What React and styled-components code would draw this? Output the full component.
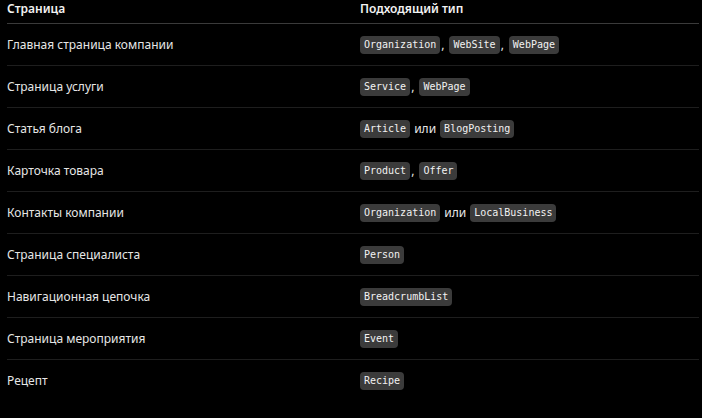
import React from 'react'
import styled, { createGlobalStyle } from 'styled-components'

const GlobalStyle = createGlobalStyle`
  html, body {
    margin: 0;
    padding: 0;
    background: #000;
  }
  body {
    font-family: "Segoe UI", "Noto Sans", sans-serif;
    color: #e8e8e8;
  }
`

const Wrapper = styled.div`
  width: 702px;
  height: 418px;
  overflow: hidden;
  background: #000;
  padding: 0 3px 0 7px;
  box-sizing: border-box;
`
const Table = styled.div`
  display: grid;
  grid-template-columns: 353px 1fr;
`
const HeadCell = styled.div`
  font-size: 12px;
  font-weight: 600;
  color: #f2f2f2;
  line-height: 17px;
  padding: 0 0 6px 0;
  border-bottom: 1px solid #3a3a3a;
`
const Cell = styled.div`
  display: flex;
  align-items: center;
  flex-wrap: wrap;
  height: 41px;
  font-size: 12px;
  color: #e6e6e6;
  border-bottom: 1px solid ${props => props.last ? 'transparent' : '#1e1e1e'};
`
const Code = styled.code`
  font-family: "DejaVu Sans Mono", "Liberation Mono", monospace;
  font-size: 10px;
  font-weight: 400;
  color: #f2f2f2;
  background: #3b3b3b;
  border-radius: 4px;
  padding: 2px 4px;
  line-height: 14px;
`
const Sep = styled.span`
  margin: 0 ${props => props.word ? '4px' : '5px'} 0 ${props => props.word ? '4px' : '1px'};
`

const rows = [
  { page: 'Главная страница компании', types: ['Organization', ',', 'WebSite', ',', 'WebPage'] },
  { page: 'Страница услуги', types: ['Service', ',', 'WebPage'] },
  { page: 'Статья блога', types: ['Article', 'или', 'BlogPosting'] },
  { page: 'Карточка товара', types: ['Product', ',', 'Offer'] },
  { page: 'Контакты компании', types: ['Organization', 'или', 'LocalBusiness'] },
  { page: 'Страница специалиста', types: ['Person'] },
  { page: 'Навигационная цепочка', types: ['BreadcrumbList'] },
  { page: 'Страница мероприятия', types: ['Event'] },
  { page: 'Рецепт', types: ['Recipe'] },
]

function TypeList({ types }) {
  return types.map((t, i) => {
    if (t === ',') return <Sep key={i}>,</Sep>
    if (t === 'или') return <Sep key={i} word>или</Sep>
    return <Code key={i}>{t}</Code>
  })
}

export default function App() {
  return (
    <Wrapper>
      <GlobalStyle />
      <Table>
        <HeadCell>Страница</HeadCell>
        <HeadCell>Подходящий тип</HeadCell>
        {rows.map((row, i) => (
          <React.Fragment key={row.page}>
            <Cell last={i === rows.length - 1}>{row.page}</Cell>
            <Cell last={i === rows.length - 1}>
              <TypeList types={row.types} />
            </Cell>
          </React.Fragment>
        ))}
      </Table>
    </Wrapper>
  )
}
